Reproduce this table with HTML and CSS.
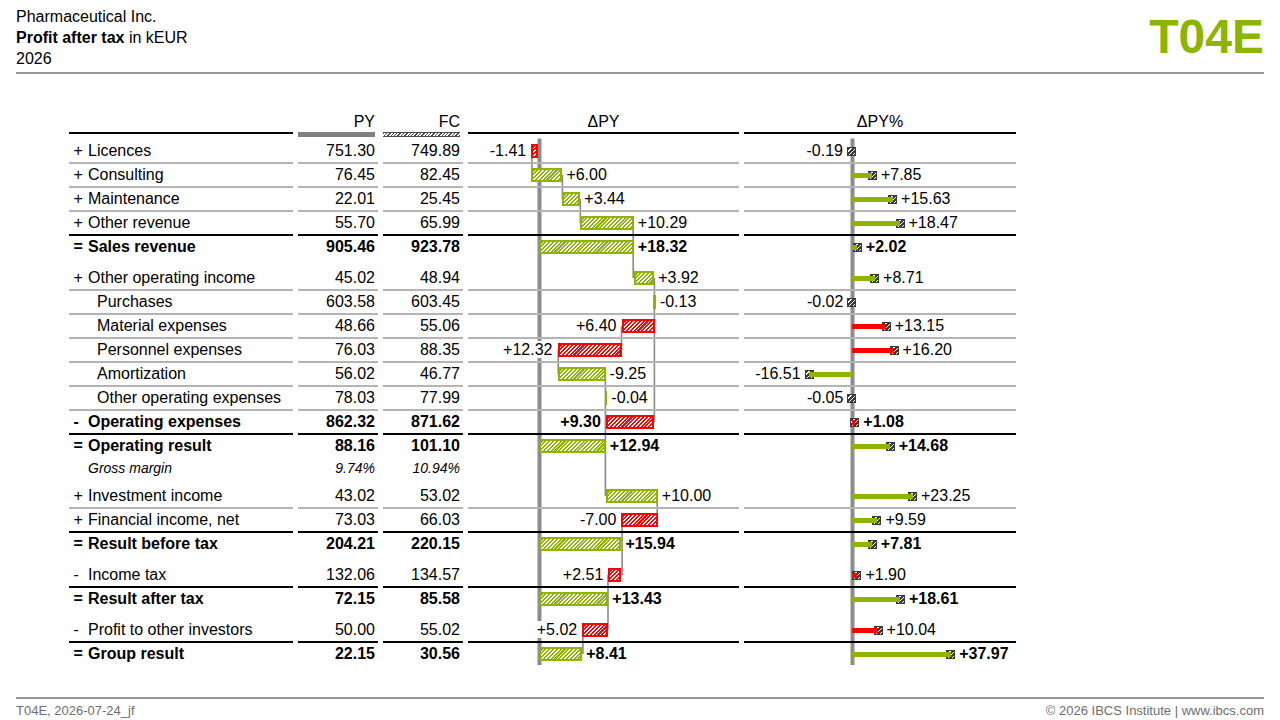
FILE: index.html
```html
<!DOCTYPE html>
<html lang="en">
<head>
<meta charset="utf-8">
<title>T04E Profit after tax</title>
<link rel="stylesheet" href="styles.css">
</head>
<body>
<header class="top">
  <div class="title">
    <div>Pharmaceutical Inc.</div>
    <div><b>Profit after tax</b> in kEUR</div>
    <div>2026</div>
  </div>
  <div class="code">T04E</div>
</header>
<div class="rule"></div>
<main class="main">
  <div class="table">
    <svg class="chart" width="947" height="560" viewBox="0 0 947 560">
      <rect x="468.5" y="28.5" width="4" height="526.5" fill="#8c8c8c"/>
      <rect x="781.5" y="28.5" width="4" height="526.5" fill="#8c8c8c"/>
      <g stroke="#8a8a8a" stroke-width="1.6">
        <line x1="462.9" y1="41" x2="462.9" y2="65"/>
        <line x1="493.4" y1="65" x2="493.4" y2="89"/>
        <line x1="511.3" y1="89" x2="511.3" y2="113"/>
        <line x1="564.2" y1="113" x2="564.2" y2="168"/>
        <line x1="585.4" y1="168" x2="585.4" y2="312"/>
        <line x1="552.5" y1="216" x2="552.5" y2="240"/>
        <line x1="489.2" y1="240" x2="489.2" y2="264"/>
        <line x1="536.4" y1="264" x2="536.4" y2="386"/>
        <line x1="588.2" y1="386" x2="588.2" y2="410"/>
        <line x1="553.1" y1="410" x2="553.1" y2="465"/>
        <line x1="539.0" y1="465" x2="539.0" y2="520"/>
        <line x1="513.9" y1="520" x2="513.9" y2="544"/>
      </g>
    </svg>

    <div class="row head">
      <div class="hc"><div class="ht"></div><div class="hl"></div></div>
      <div class="hc num"><div class="ht">PY</div><div class="hpy"></div></div>
      <div class="hc num"><div class="ht">FC</div><div class="hfc"></div></div>
      <div class="hc ctr"><div class="ht">ΔPY</div><div class="hl"></div></div>
      <div class="hc ctr"><div class="ht">ΔPY%</div><div class="hl"></div></div>
    </div>

    <div class="row g">
      <div class="lab"><span class="sg">+</span><span>Licences</span></div>
      <div class="num">751.30</div>
      <div class="num">749.89</div>
      <div class="dc"><span class="lead" style="width:58.2px"><span class="vl">-1.41</span></span><span class="bar rd" style="width:7.3px"></span></div>
      <div class="pc"><span class="lead" style="width:99px"><span class="vl">-0.19</span></span><span class="mk"></span></div>
    </div>

    <div class="row g">
      <div class="lab"><span class="sg">+</span><span>Consulting</span></div>
      <div class="num">76.45</div>
      <div class="num">82.45</div>
      <div class="dc"><span class="sp" style="width:63.2px"></span><span class="bar gr" style="width:31.2px"></span><span class="vl">+6.00</span></div>
      <div class="pc"><span class="sp" style="width:108px"></span><span class="ln gr" style="width:20.4px"></span><span class="mk"></span><span class="vl">+7.85</span></div>
    </div>

    <div class="row g">
      <div class="lab"><span class="sg">+</span><span>Maintenance</span></div>
      <div class="num">22.01</div>
      <div class="num">25.45</div>
      <div class="dc"><span class="sp" style="width:94.4px"></span><span class="bar gr" style="width:17.9px"></span><span class="vl">+3.44</span></div>
      <div class="pc"><span class="sp" style="width:108px"></span><span class="ln gr" style="width:40.6px"></span><span class="mk"></span><span class="vl">+15.63</span></div>
    </div>

    <div class="row k">
      <div class="lab"><span class="sg">+</span><span>Other revenue</span></div>
      <div class="num">55.70</div>
      <div class="num">65.99</div>
      <div class="dc"><span class="sp" style="width:112.3px"></span><span class="bar gr" style="width:53.5px"></span><span class="vl">+10.29</span></div>
      <div class="pc"><span class="sp" style="width:108px"></span><span class="ln gr" style="width:48px"></span><span class="mk"></span><span class="vl">+18.47</span></div>
    </div>

    <div class="row n b">
      <div class="lab"><span class="sg">=</span><span>Sales revenue</span></div>
      <div class="num">905.46</div>
      <div class="num">923.78</div>
      <div class="dc"><span class="sp" style="width:70.5px"></span><span class="bar gr" style="width:95.3px"></span><span class="vl">+18.32</span></div>
      <div class="pc"><span class="sp" style="width:108px"></span><span class="ln gr" style="width:5.3px"></span><span class="mk"></span><span class="vl">+2.02</span></div>
    </div>

    <div class="gap7"></div>

    <div class="row g">
      <div class="lab"><span class="sg">+</span><span>Other operating income</span></div>
      <div class="num">45.02</div>
      <div class="num">48.94</div>
      <div class="dc"><span class="sp" style="width:165.8px"></span><span class="bar gr" style="width:20.4px"></span><span class="vl">+3.92</span></div>
      <div class="pc"><span class="sp" style="width:108px"></span><span class="ln gr" style="width:22.6px"></span><span class="mk"></span><span class="vl">+8.71</span></div>
    </div>

    <div class="row g">
      <div class="lab"><span class="sg"></span><span class="ind">Purchases</span></div>
      <div class="num">603.58</div>
      <div class="num">603.45</div>
      <div class="dc"><span class="sp" style="width:185.4px"></span><span class="bar thin"></span><span class="vl">-0.13</span></div>
      <div class="pc"><span class="lead" style="width:99.4px"><span class="vl">-0.02</span></span><span class="mk"></span></div>
    </div>

    <div class="row g">
      <div class="lab"><span class="sg"></span><span class="ind">Material expenses</span></div>
      <div class="num">48.66</div>
      <div class="num">55.06</div>
      <div class="dc"><span class="lead" style="width:148.5px"><span class="vl">+6.40</span></span><span class="bar rd" style="width:33.3px"></span></div>
      <div class="pc"><span class="sp" style="width:108px"></span><span class="ln rd" style="width:34.2px"></span><span class="mk"></span><span class="vl">+13.15</span></div>
    </div>

    <div class="row g">
      <div class="lab"><span class="sg"></span><span class="ind">Personnel expenses</span></div>
      <div class="num">76.03</div>
      <div class="num">88.35</div>
      <div class="dc"><span class="lead" style="width:84.5px"><span class="vl">+12.32</span></span><span class="bar rd" style="width:64.1px"></span></div>
      <div class="pc"><span class="sp" style="width:108px"></span><span class="ln rd" style="width:42.1px"></span><span class="mk"></span><span class="vl">+16.20</span></div>
    </div>

    <div class="row g">
      <div class="lab"><span class="sg"></span><span class="ind">Amortization</span></div>
      <div class="num">56.02</div>
      <div class="num">46.77</div>
      <div class="dc"><span class="sp" style="width:89.5px"></span><span class="bar gr" style="width:48.1px"></span><span class="vl">-9.25</span></div>
      <div class="pc"><span class="lead" style="width:56.6px"><span class="vl">-16.51</span></span><span class="mk"></span><span class="ln gr" style="width:42.9px"></span></div>
    </div>

    <div class="row g">
      <div class="lab"><span class="sg"></span><span class="ind">Other operating expenses</span></div>
      <div class="num">78.03</div>
      <div class="num">77.99</div>
      <div class="dc"><span class="sp" style="width:136.8px"></span><span class="bar thin"></span><span class="vl">-0.04</span></div>
      <div class="pc"><span class="lead" style="width:99.4px"><span class="vl">-0.05</span></span><span class="mk"></span></div>
    </div>

    <div class="row k b">
      <div class="lab"><span class="sg">-</span><span>Operating expenses</span></div>
      <div class="num">862.32</div>
      <div class="num">871.62</div>
      <div class="dc"><span class="lead" style="width:132.8px"><span class="vl">+9.30</span></span><span class="bar rd" style="width:48.4px"></span></div>
      <div class="pc"><span class="sp" style="width:108px"></span><span class="ln rd" style="width:2.8px"></span><span class="mk"></span><span class="vl">+1.08</span></div>
    </div>

    <div class="row n b">
      <div class="lab"><span class="sg">=</span><span>Operating result</span></div>
      <div class="num">88.16</div>
      <div class="num">101.10</div>
      <div class="dc"><span class="sp" style="width:70.5px"></span><span class="bar gr" style="width:67.3px"></span><span class="vl">+12.94</span></div>
      <div class="pc"><span class="sp" style="width:108px"></span><span class="ln gr" style="width:38.2px"></span><span class="mk"></span><span class="vl">+14.68</span></div>
    </div>

    <div class="row gm">
      <div class="lab"><span class="sg"></span><span>Gross margin</span></div>
      <div class="num">9.74%</div>
      <div class="num">10.94%</div>
      <div></div>
      <div></div>
    </div>

    <div class="gap8"></div>

    <div class="row g">
      <div class="lab"><span class="sg">+</span><span>Investment income</span></div>
      <div class="num">43.02</div>
      <div class="num">53.02</div>
      <div class="dc"><span class="sp" style="width:137.8px"></span><span class="bar gr" style="width:52px"></span><span class="vl">+10.00</span></div>
      <div class="pc"><span class="sp" style="width:108px"></span><span class="ln gr" style="width:60.5px"></span><span class="mk"></span><span class="vl">+23.25</span></div>
    </div>

    <div class="row k">
      <div class="lab"><span class="sg">+</span><span>Financial income, net</span></div>
      <div class="num">73.03</div>
      <div class="num">66.03</div>
      <div class="dc"><span class="lead" style="width:148.4px"><span class="vl">-7.00</span></span><span class="bar rd" style="width:36.4px"></span></div>
      <div class="pc"><span class="sp" style="width:108px"></span><span class="ln gr" style="width:24.9px"></span><span class="mk"></span><span class="vl">+9.59</span></div>
    </div>

    <div class="row n b">
      <div class="lab"><span class="sg">=</span><span>Result before tax</span></div>
      <div class="num">204.21</div>
      <div class="num">220.15</div>
      <div class="dc"><span class="sp" style="width:70.5px"></span><span class="bar gr" style="width:82.9px"></span><span class="vl">+15.94</span></div>
      <div class="pc"><span class="sp" style="width:108px"></span><span class="ln gr" style="width:20.3px"></span><span class="mk"></span><span class="vl">+7.81</span></div>
    </div>

    <div class="gap7"></div>

    <div class="row k">
      <div class="lab"><span class="sg">-</span><span>Income tax</span></div>
      <div class="num">132.06</div>
      <div class="num">134.57</div>
      <div class="dc"><span class="lead" style="width:135.3px"><span class="vl">+2.51</span></span><span class="bar rd" style="width:13.1px"></span></div>
      <div class="pc"><span class="sp" style="width:108px"></span><span class="ln rd" style="width:4.9px"></span><span class="mk"></span><span class="vl">+1.90</span></div>
    </div>

    <div class="row n b">
      <div class="lab"><span class="sg">=</span><span>Result after tax</span></div>
      <div class="num">72.15</div>
      <div class="num">85.58</div>
      <div class="dc"><span class="sp" style="width:70.5px"></span><span class="bar gr" style="width:69.8px"></span><span class="vl">+13.43</span></div>
      <div class="pc"><span class="sp" style="width:108px"></span><span class="ln gr" style="width:48.4px"></span><span class="mk"></span><span class="vl">+18.61</span></div>
    </div>

    <div class="gap7"></div>

    <div class="row k">
      <div class="lab"><span class="sg">-</span><span>Profit to other investors</span></div>
      <div class="num">50.00</div>
      <div class="num">55.02</div>
      <div class="dc"><span class="lead" style="width:109.2px"><span class="vl">+5.02</span></span><span class="bar rd" style="width:26.1px"></span></div>
      <div class="pc"><span class="sp" style="width:108px"></span><span class="ln rd" style="width:26.1px"></span><span class="mk"></span><span class="vl">+10.04</span></div>
    </div>

    <div class="row n b">
      <div class="lab"><span class="sg">=</span><span>Group result</span></div>
      <div class="num">22.15</div>
      <div class="num">30.56</div>
      <div class="dc"><span class="sp" style="width:70.5px"></span><span class="bar gr" style="width:43.7px"></span><span class="vl">+8.41</span></div>
      <div class="pc"><span class="sp" style="width:108px"></span><span class="ln gr" style="width:98.7px"></span><span class="mk"></span><span class="vl">+37.97</span></div>
    </div>
  </div>
</main>
<div class="rule"></div>
<footer class="foot">
  <span>T04E, 2026-07-24_jf</span>
  <span>© 2026 IBCS Institute | www.ibcs.com</span>
</footer>
</body>
</html>
```

FILE: styles.css
```css
* { box-sizing: border-box; }
html, body { margin: 0; padding: 0; }
body {
  width: 1280px;
  height: 720px;
  overflow: hidden;
  background: #fff;
  color: #000;
  font-family: "Liberation Sans", Arial, sans-serif;
  display: flex;
  flex-direction: column;
}

.top {
  height: 72px;
  padding: 6px 16px 0 16px;
  display: flex;
  justify-content: space-between;
  align-items: flex-start;
  flex-shrink: 0;
}
.title { font-size: 16px; line-height: 21px; }
.code {
  font-size: 48px;
  line-height: 48px;
  font-weight: bold;
  color: #8cb400;
  margin-top: 7px;
}
.rule {
  height: 2px;
  margin: 0 16px;
  background: #969696;
  flex-shrink: 0;
}

.main {
  flex: 1;
  padding: 36px 0 0 69px;
}
.table {
  position: relative;
  z-index: 0;
  width: 947px;
}
.chart {
  position: absolute;
  left: 0;
  top: 0;
  z-index: -1;
}

.row {
  display: grid;
  grid-template-columns: 224px 80px 80px 271px 272px;
  column-gap: 5px;
}
.row > div {
  height: 24px;
  border-bottom: 2px solid transparent;
  font-size: 16px;
  line-height: 22px;
  white-space: nowrap;
}
.row.g > div { border-bottom-color: #b4b4b4; }
.row.k > div { border-bottom-color: #000; }
.row.b { font-weight: bold; }

.row.head { align-items: start; margin-bottom: 3px; }
.row.head > div { height: auto; border: none; }
.ht { height: 22px; padding-top: 2px; line-height: 20px; }
.hc.ctr { text-align: center; }
.hl { height: 2px; background: #000; }
.hpy { height: 5px; background: #808080; }
.hfc {
  height: 5px;
  border-top: 1px solid #4a4a4a;
  border-bottom: 1px solid #4a4a4a;
  background: repeating-linear-gradient(135deg, #4a4a4a 0 1px, #fff 1px 2.4px);
}

.row.gm > div {
  height: 18px;
  border: none;
  font-size: 14px;
  line-height: 18px;
  font-style: italic;
}

.gap7 { height: 7px; }
.gap8 { height: 8px; }

.lab { display: flex; padding-left: 4.5px; }
.sg { width: 14.5px; flex-shrink: 0; }
.ind { margin-left: 9px; }
.num { text-align: right; padding-right: 3px; }

.dc, .pc { display: flex; align-items: center; }
.sp, .lead { flex-shrink: 0; height: 22px; }
.lead { text-align: right; }
.vl { background: #fff; flex-shrink: 0; }

.bar {
  flex-shrink: 0;
  height: 14px;
  border: 2px solid #8cb400;
}
.bar.gr {
  border-color: #8cb400;
  background: repeating-linear-gradient(135deg, #8cb400 0 1.5px, #fff 1.5px 2.7px);
}
.bar.rd {
  border-color: #ff0000;
  background: repeating-linear-gradient(135deg, #ff0000 0 1.5px, #fff 1.5px 2.7px);
}
.bar.thin {
  width: 2.5px;
  border: none;
  background: #8cb400;
}
.dc .bar + .vl { margin-left: 4px; }
.dc .lead + .bar { margin-left: 5px; }

.ln {
  flex-shrink: 0;
  height: 5px;
  position: relative;
  z-index: 1;
}
.ln.gr { background: #8cb400; }
.ln.rd { background: #ff0000; }
.mk {
  flex-shrink: 0;
  width: 9px;
  height: 9px;
  border: 1px solid #3a3a3a;
  background: repeating-linear-gradient(135deg, #3a3a3a 0 2px, #fff 2px 3px);
}
.pc .ln + .mk { margin-left: -4.5px; }
.pc .mk + .vl { margin-left: 4px; }
.pc .lead + .mk { margin-left: 4px; }
.pc .mk + .ln { margin-left: -4.5px; }

.foot {
  flex-shrink: 0;
  height: 19px;
  margin-bottom: 2px;
  padding: 4px 16px 0 16px;
  display: flex;
  justify-content: space-between;
  font-size: 13px;
  line-height: 15px;
  color: #6e6e6e;
}
```
